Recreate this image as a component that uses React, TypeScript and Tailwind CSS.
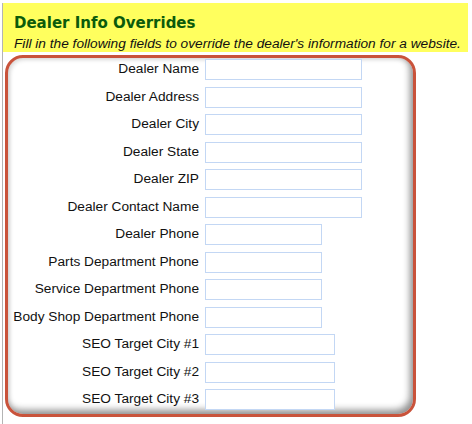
const fields: { label: string; width: string }[] = [
  { label: "Dealer Name", width: "w-[157px]" },
  { label: "Dealer Address", width: "w-[157px]" },
  { label: "Dealer City", width: "w-[157px]" },
  { label: "Dealer State", width: "w-[157px]" },
  { label: "Dealer ZIP", width: "w-[157px]" },
  { label: "Dealer Contact Name", width: "w-[157px]" },
  { label: "Dealer Phone", width: "w-[117px]" },
  { label: "Parts Department Phone", width: "w-[117px]" },
  { label: "Service Department Phone", width: "w-[117px]" },
  { label: "Body Shop Department Phone", width: "w-[117px]" },
  { label: "SEO Target City #1", width: "w-[130px]" },
  { label: "SEO Target City #2", width: "w-[130px]" },
  { label: "SEO Target City #3", width: "w-[130px]" },
];

export default function App() {
  return (
    <div className="ml-[2px] min-h-screen border-l border-[#b4b4b4] bg-white font-['Liberation_Sans',Arial,sans-serif]">
      {/* Header */}
      <div className="mt-[3px] mr-[4px] h-[49px] bg-[#ffff5e] pl-[11px] pt-[10px]">
        <h1 className="text-[15px] leading-[20px] font-bold text-[#0b5b0b] font-['DejaVu_Sans',Verdana,sans-serif]">
          Dealer Info Overrides
        </h1>
        <p className="mt-[3px] whitespace-nowrap text-[13.7px] leading-[16px] italic text-[#111]">
          Fill in the following fields to override the dealer's information for a website.
        </p>
      </div>

      {/* Fields panel */}
      <div className="ml-[2px] mt-[3px] h-[362px] w-[411px] rounded-[18px] border-[3px] border-[#c9533b] pt-[1px] shadow-[inset_-3px_-4px_7px_#8f8f8f,inset_2px_2px_4px_#e2e2e2]">
        <div className="flex flex-col gap-[6.5px]">
          {fields.map((f) => (
            <div key={f.label} className="flex h-[21px] items-center">
              <label className="w-[197px] shrink-0 whitespace-nowrap pr-[6px] text-right text-[13.7px] text-[#111]">
                {f.label}
              </label>
              <input
                type="text"
                className={`${f.width} h-[21px] border border-[#c3d7f4] bg-white outline-none`}
              />
            </div>
          ))}
        </div>
      </div>
    </div>
  );
}
